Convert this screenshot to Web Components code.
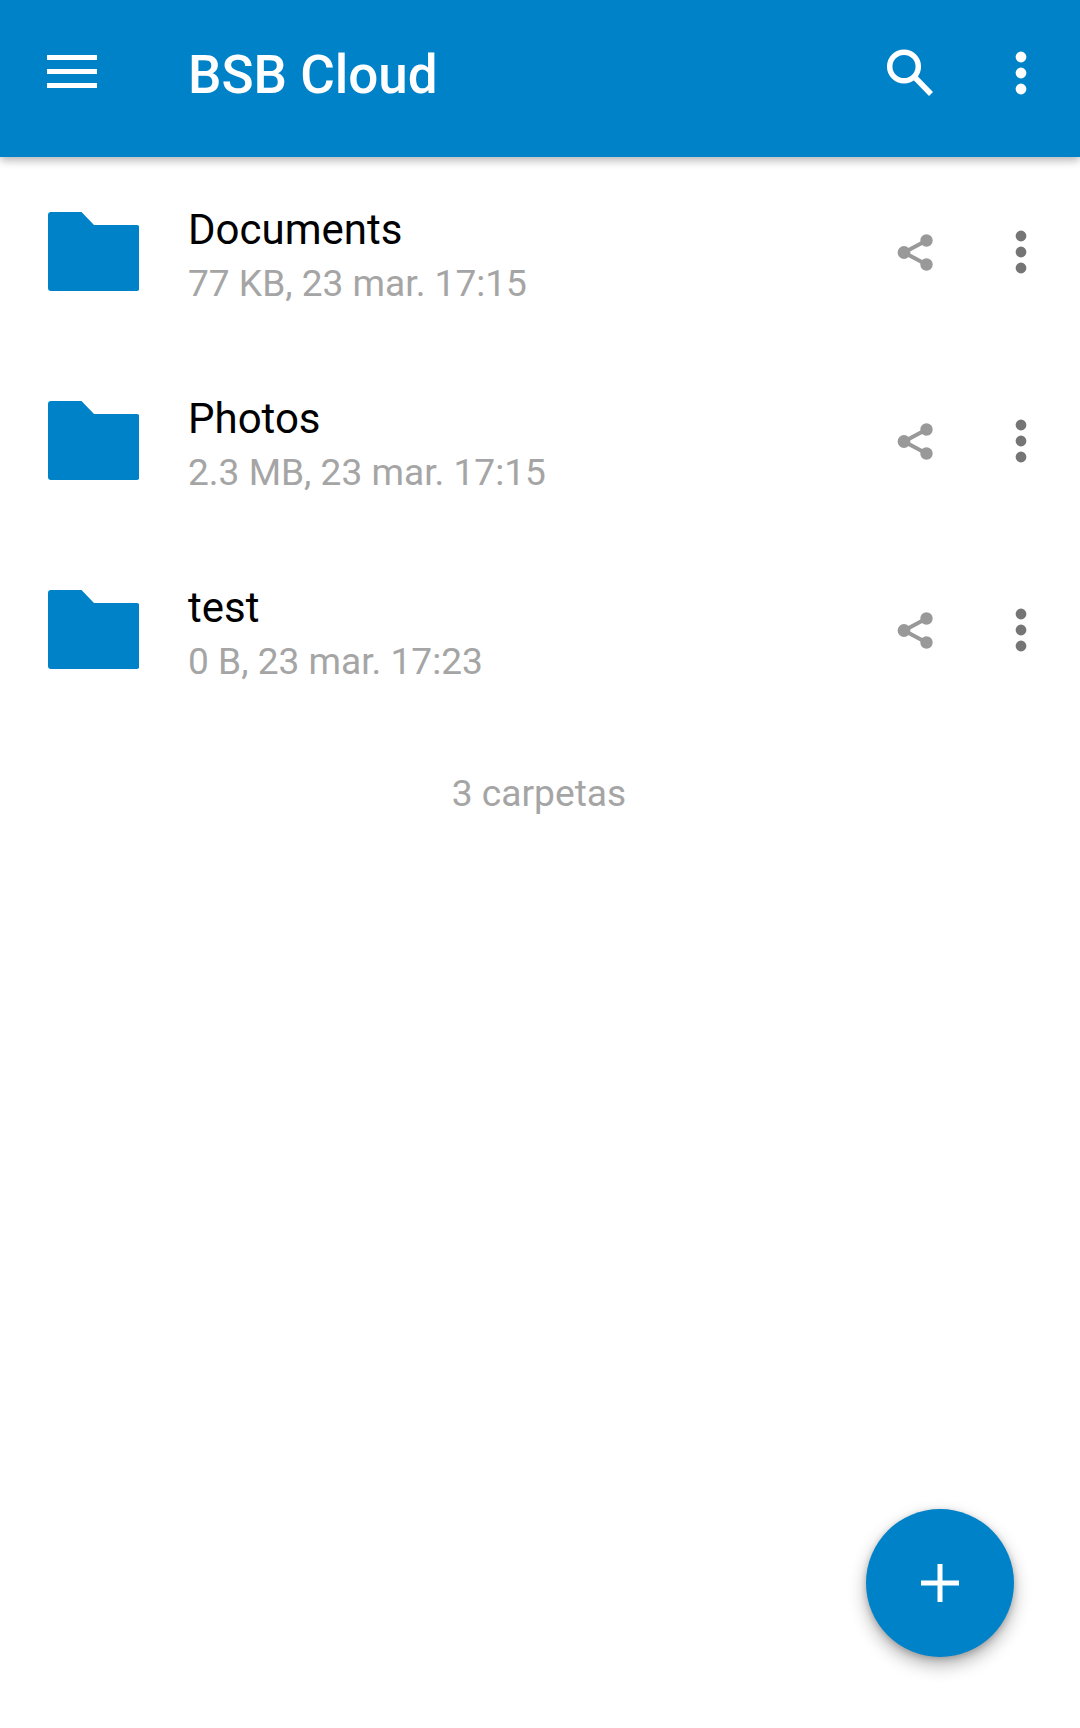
<!DOCTYPE html>
<html lang="es">
<head>
<meta charset="utf-8">
<title>BSB Cloud</title>
<style>
    html, body {
        margin: 0;
        padding: 0;
        background: #fff;
    }
    body {
        font-family: Roboto, "Liberation Sans", sans-serif;
        width: 1080px;
        height: 1728px;
        overflow: hidden;
    }
</style>
</head>
<body>
<cloud-app>
    <app-bar slot="bar">BSB Cloud</app-bar>
    <file-row><span slot="name">Documents</span><span slot="meta">77 KB, 23 mar. 17:15</span></file-row>
    <file-row><span slot="name">Photos</span><span slot="meta">2.3 MB, 23 mar. 17:15</span></file-row>
    <file-row><span slot="name">test</span><span slot="meta">0 B, 23 mar. 17:23</span></file-row>
    <list-footer>3 carpetas</list-footer>
    <add-fab slot="fab"></add-fab>
</cloud-app>

<script>
const appTemplate = document.createElement("template")
appTemplate.innerHTML = /*html*/`
    <style>
    :host {
        display: flex;
        flex-direction: column;
        position: relative;
        width: 1080px;
        height: 1728px;
        background: #fff;
    }
    </style>
    <slot name="bar"></slot>
    <main><slot></slot></main>
    <slot name="fab"></slot>
`

class CloudApp extends HTMLElement
{
    constructor(){
        super();
        this.attachShadow({mode: "open"}).append(appTemplate.content.cloneNode(true))
    }
}

const barTemplate = document.createElement("template")
barTemplate.innerHTML = /*html*/`
    <style>
    :host {
        display: flex;
        align-items: center;
        position: relative;
        z-index: 1;
        height: 157px;
        padding: 0 6.5px 10px 47px;
        box-sizing: border-box;
        background: #0082c9;
        box-shadow: 0 3px 9px rgba(0, 0, 0, .32);
        color: #fff;
    }
    .menu {
        display: flex;
        flex-direction: column;
        gap: 9px;
        width: 50px;
        margin: 0 91px 4px 0;
    }
    .menu i {
        display: block;
        height: 5px;
        background: #fff;
    }
    .title {
        flex: 1;
        font-size: 53px;
        font-weight: 500;
        line-height: 60px;
        padding-top: 3px;
    }
    .act {
        display: flex;
        align-items: center;
        justify-content: center;
        width: 105px;
    }
    svg { display: block; }
    </style>
    <div class="menu"><i></i><i></i><i></i></div>
    <div class="title"><slot></slot></div>
    <div class="act">
        <svg width="60" height="60" viewBox="0 0 60 60" fill="none" stroke="#fff" stroke-width="5.5">
            <circle cx="18" cy="22.5" r="14.3"/>
            <path d="M28.5 33L45 50"/>
        </svg>
    </div>
    <div class="act">
        <svg width="60" height="60" viewBox="0 0 60 60" fill="#fff">
            <circle cx="30" cy="13" r="5.4"/>
            <circle cx="30" cy="29" r="5.4"/>
            <circle cx="30" cy="45" r="5.4"/>
        </svg>
    </div>
`

class AppBar extends HTMLElement
{
    constructor(){
        super();
        this.attachShadow({mode: "open"}).append(barTemplate.content.cloneNode(true))
    }
}

const rowTemplate = document.createElement("template")
rowTemplate.innerHTML = /*html*/`
    <style>
    :host {
        display: flex;
        align-items: center;
        height: 189px;
        padding: 0 6.5px 0 47.5px;
        box-sizing: border-box;
    }
    .folder {
        display: block;
        margin-right: 49px;
    }
    .text {
        flex: 1;
        display: flex;
        flex-direction: column;
        padding-top: 10px;
    }
    .name {
        font-size: 42px;
        line-height: 54px;
        color: #000;
    }
    .meta {
        font-size: 37.1px;
        line-height: 54px;
        color: #a5a5a5;
    }
    .act {
        display: flex;
        align-items: center;
        justify-content: center;
        width: 105px;
    }
    svg { display: block; }
    </style>
    <svg class="folder" width="91.5" height="79" viewBox="0 0 91.5 79" fill="#0082c9">
        <path d="M3 0H33.5L46 13H88.5a3 3 0 0 1 3 3V76a3 3 0 0 1-3 3H3a3 3 0 0 1-3-3V3a3 3 0 0 1 3-3z"/>
    </svg>
    <div class="text">
        <div class="name"><slot name="name"></slot></div>
        <div class="meta"><slot name="meta"></slot></div>
    </div>
    <div class="act">
        <svg width="60" height="60" viewBox="0 0 60 60" fill="#999" stroke="#999" stroke-width="4">
            <path d="M18 30.5L40.5 18.5M18 30.5L40.5 42.5" fill="none"/>
            <circle cx="18" cy="30.5" r="4.4"/>
            <circle cx="40.5" cy="18.5" r="4.2"/>
            <circle cx="40.5" cy="42.5" r="4.2"/>
        </svg>
    </div>
    <div class="act">
        <svg width="60" height="60" viewBox="0 0 60 60" fill="#757575">
            <circle cx="30" cy="14" r="5.4"/>
            <circle cx="30" cy="30" r="5.4"/>
            <circle cx="30" cy="46" r="5.4"/>
        </svg>
    </div>
`

class FileRow extends HTMLElement
{
    constructor(){
        super();
        this.attachShadow({mode: "open"}).append(rowTemplate.content.cloneNode(true))
    }
}

const footerTemplate = document.createElement("template")
footerTemplate.innerHTML = /*html*/`
    <style>
    :host {
        display: block;
        padding: 47px 2px 0 0;
        font-size: 37.2px;
        line-height: 44px;
        text-align: center;
        color: #a5a5a5;
    }
    </style>
    <slot></slot>
`

class ListFooter extends HTMLElement
{
    constructor(){
        super();
        this.attachShadow({mode: "open"}).append(footerTemplate.content.cloneNode(true))
    }
}

const fabTemplate = document.createElement("template")
fabTemplate.innerHTML = /*html*/`
    <style>
    :host {
        display: flex;
        align-items: center;
        justify-content: center;
        position: absolute;
        left: 866px;
        top: 1509px;
        width: 148px;
        height: 148px;
        border-radius: 50%;
        background: #0082c9;
        box-shadow: 0 8px 17px rgba(0, 0, 0, .3), 0 2px 6px rgba(0, 0, 0, .2);
    }
    svg { display: block; }
    </style>
    <svg width="38" height="38" viewBox="0 0 38 38" fill="#fff">
        <path d="M16.5 0h5v16.5H38v5H21.5V38h-5V21.5H0v-5h16.5z"/>
    </svg>
`

class AddFab extends HTMLElement
{
    constructor(){
        super();
        this.attachShadow({mode: "open"}).append(fabTemplate.content.cloneNode(true))
    }
}

customElements.define('cloud-app', CloudApp);
customElements.define('app-bar', AppBar);
customElements.define('file-row', FileRow);
customElements.define('list-footer', ListFooter);
customElements.define('add-fab', AddFab);
</script>
</body>
</html>
